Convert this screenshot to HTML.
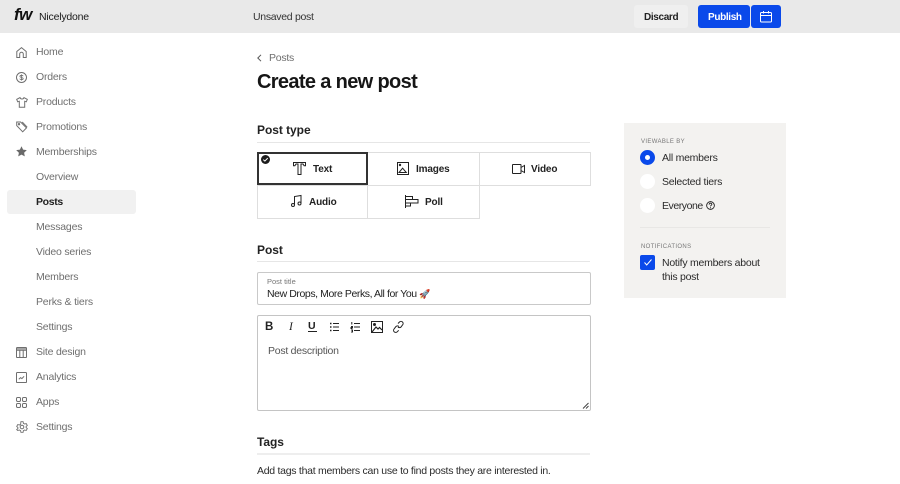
<!DOCTYPE html>
<html lang="en"><head><meta charset="utf-8"><title>Create a new post</title>
<style>
html,body{margin:0;padding:0;background:#fff}
body{width:900px;height:484px;overflow:hidden;position:relative;font-family:"Liberation Sans",sans-serif;color:#1a1a1a}
.t{position:absolute;white-space:nowrap;line-height:14px;font-size:10.5px;letter-spacing:-.25px}
.nav{color:#6f6f6f;left:36px;font-size:10.5px;letter-spacing:-.2px}
.b{font-weight:bold}
.lb{font-size:10px;font-weight:bold;letter-spacing:-.15px;color:#222}
.r{position:absolute}
svg{position:absolute;overflow:visible;fill:none}
.i{stroke:#6f6f6f;stroke-width:1}
.k{stroke:#222;stroke-width:1}
.line{position:absolute;left:257px;width:333px;height:1px;background:#e6e6e6}
.h{left:257px;font-size:12px;font-weight:bold;letter-spacing:-.05px;color:#222}
.cell{position:absolute;box-sizing:border-box;border:1px solid #dedede}
.radio{position:absolute;left:640px;width:15px;height:15px;border-radius:50%;background:#fff}
</style></head><body>

<div class="r" style="left:0;top:0;width:900px;height:33px;background:#e9e9e9"></div>
<div class="t b" style="left:14px;top:8px;font-size:17px;font-style:italic;letter-spacing:-.5px;color:#111">fw</div>
<div class="t" style="left:39px;top:10px;font-size:10.5px;color:#1a1a1a;letter-spacing:-.2px">Nicelydone</div>
<div class="t" style="left:253px;top:10px;font-size:10.5px;color:#333;letter-spacing:-.3px">Unsaved post</div>

<div class="r" style="left:634px;top:5px;width:54px;height:23px;background:#efefef;border-radius:3px"></div>
<div class="t lb" style="left:644px;top:11px;letter-spacing:-.35px">Discard</div>
<div class="r" style="left:698px;top:5px;width:52px;height:23px;background:#0a49ea;border-radius:3px"></div>
<div class="t lb" style="left:708px;top:11px;color:#fff;letter-spacing:-.35px">Publish</div>
<div class="r" style="left:751px;top:5px;width:30px;height:23px;background:#0a49ea;border-radius:3px"></div>
<svg style="left:760px;top:11px" width="12" height="12" viewBox="0 0 12 12" stroke="#fff" stroke-width="1"><rect x=".5" y="1.500" width="11" height="9.500" rx="1"/><path d="M.5 4.500h11M3.500 0v2.500M8.500 0v2.500"/></svg>

<!-- sidebar -->
<div class="r" style="left:7px;top:190px;width:129px;height:24px;background:#f1f1f1;border-radius:3px"></div>
<div class="t nav" style="top:45px">Home</div>
<div class="t nav" style="top:70px">Orders</div>
<div class="t nav" style="top:95px">Products</div>
<div class="t nav" style="top:120px">Promotions</div>
<div class="t nav" style="top:145px">Memberships</div>
<div class="t nav" style="top:170px">Overview</div>
<div class="t nav b" style="top:195px;color:#222;letter-spacing:-.35px">Posts</div>
<div class="t nav" style="top:220px">Messages</div>
<div class="t nav" style="top:245px">Video series</div>
<div class="t nav" style="top:270px">Members</div>
<div class="t nav" style="top:295px">Perks &amp; tiers</div>
<div class="t nav" style="top:320px">Settings</div>
<div class="t nav" style="top:345px">Site design</div>
<div class="t nav" style="top:370px">Analytics</div>
<div class="t nav" style="top:395px">Apps</div>
<div class="t nav" style="top:420px">Settings</div>

<svg class="i" style="left:16px;top:47px" width="11" height="11" viewBox="0 0 11 11"><path d="M.8 10.500V4.500L5.500.6l4.700 3.900v6H7.300V7a1.800 1.800 0 0 0-3.600 0v3.500z"/></svg>
<svg class="i" style="left:16px;top:72px" width="11" height="11" viewBox="0 0 11 11"><circle cx="5.500" cy="5.500" r="5"/><path d="M7.200 4.200c-.3-.7-1-.9-1.700-.9-.9 0-1.600.4-1.600 1.100 0 1.500 3.300.7 3.300 2.200 0 .7-.7 1.100-1.700 1.100-.8 0-1.500-.3-1.800-1M5.500 2.400v6.200" stroke-width=".8"/></svg>
<svg class="i" style="left:16px;top:97px" width="12" height="11" viewBox="0 0 12 11"><path d="M4 .6 .7 2.400l1 2.400 1.600-.5v6h5.400v-6l1.600.5 1-2.400L8 .6c-.3 1.900-3.700 1.900-4 0z"/></svg>
<svg class="i" style="left:16px;top:121px" width="12" height="12" viewBox="0 0 12 12"><path d="M.7 1v3.600l6 6.200 3.800-3.900L4.600 1z"/><path d="M6.200 1l5 5.200"/><circle cx="3" cy="3.200" r=".7"/></svg>
<svg style="left:16px;top:146px" width="11" height="11" viewBox="0 0 11 11"><path fill="#6a6a6a" d="M5.500.2l1.600 3.400 3.700.5-2.700 2.600.7 3.700-3.300-1.800-3.300 1.800.7-3.700L.2 4.100l3.700-.5z"/></svg>
<svg class="i" style="left:16px;top:347px" width="11" height="11" viewBox="0 0 11 11"><rect x=".5" y=".5" width="10" height="10" rx=".8"/><path d="M.5 3.300h10M3.800 3.300v7.200M7.200 3.300v7.200M.5 1.900h10"/></svg>
<svg class="i" style="left:16px;top:372px" width="11" height="11" viewBox="0 0 11 11"><rect x=".5" y=".5" width="10" height="10" rx=".8"/><path d="M2.800 7.200l1.800-1.600 1.300 1 2.200-2.300"/></svg>
<svg class="i" style="left:16px;top:397px" width="11" height="11" viewBox="0 0 11 11"><rect x=".5" y=".5" width="4" height="4" rx="1.200"/><rect x="6.500" y=".5" width="4" height="4" rx="1.200"/><rect x=".5" y="6.500" width="4" height="4" rx="1.200"/><rect x="6.500" y="6.500" width="4" height="4" rx="1.200"/></svg>
<svg class="i" style="left:16px;top:421px" width="12" height="12" viewBox="0 0 12 12"><circle cx="6" cy="6" r="1.800"/><path d="M4.900.7h2.200l.3 1.600 1.300.7 1.500-.5 1.100 1.900-1.200 1.100v1l1.200 1.100-1.100 1.900-1.500-.5-1.300.7-.3 1.600H4.900l-.3-1.600-1.300-.7-1.500.5L.7 8.600l1.200-1.100v-1L.7 5.400l1.100-1.900 1.500.5 1.300-.7z" stroke-width=".9"/></svg>

<!-- main -->
<svg style="left:257px;top:54px" width="5" height="8" viewBox="0 0 5 8" stroke="#555" stroke-width="1"><path d="M4 .8.8 4 4 7.200"/></svg>
<div class="t" style="left:269px;top:51px;color:#6f6f6f;font-size:10.500px">Posts</div>
<div class="t b" style="left:257px;top:70px;font-size:20px;line-height:24px;letter-spacing:-.65px;color:#161616">Create a new post</div>

<div class="t h" style="top:123px">Post type</div>
<div class="line" style="top:142px"></div>

<div class="cell" style="left:257px;top:152px;width:334px;height:34px"></div>
<div class="cell" style="left:257px;top:185px;width:223px;height:34px"></div>
<div class="r" style="left:367px;top:152px;width:1px;height:67px;background:#dedede"></div>
<div class="r" style="left:479px;top:152px;width:1px;height:34px;background:#dedede"></div>
<div class="r" style="left:257px;top:152px;width:111px;height:33px;box-sizing:border-box;border:2px solid #333;background:#fff"></div>
<svg style="left:261px;top:155px" width="9" height="9" viewBox="0 0 9 9"><circle cx="4.500" cy="4.500" r="4.500" fill="#1c1c1c"/><path d="M2.300 4.600l1.600 1.500 2.800-3" stroke="#fff" stroke-width="1"/></svg>
<svg class="k" style="left:293px;top:162px" width="13" height="13" viewBox="0 0 13 13"><path d="M.5.5h12v3.200h-1.400L10 2H8v10.500H5V2H3L1.900 3.700H.5z"/></svg>
<div class="t lb" style="left:313px;top:162px;top:162.500px">Text</div>
<svg class="k" style="left:397px;top:162px" width="12" height="13" viewBox="0 0 12 13"><rect x=".5" y=".5" width="11" height="12"/><path d="M2 10.500l3.600-4.300 3.700 4.300z"/><circle cx="3" cy="3" r=".7"/></svg>
<div class="t lb" style="left:416px;top:163px">Images</div>
<svg class="k" style="left:512px;top:164px" width="13" height="10" viewBox="0 0 13 10"><rect x=".5" y=".5" width="8.500" height="9" rx=".5"/><path d="M9 3.500l3.500-2v7L9 6.500"/></svg>
<div class="t lb" style="left:531px;top:163px">Video</div>
<svg class="k" style="left:291px;top:195px" width="11" height="12" viewBox="0 0 11 12"><path d="M3.500 10V1.500l6.500-1V8.500"/><circle cx="2" cy="10" r="1.500"/><circle cx="8.500" cy="8.500" r="1.500"/></svg>
<div class="t lb" style="left:309px;top:196px">Audio</div>
<svg class="k" style="left:405px;top:195px" width="14" height="13" viewBox="0 0 14 13"><path d="M.5 0v13M.5 1.500h7v3h-7M.5 4.500h12.500v3.500H.5M.5 8h5v3H.5"/></svg>
<div class="t lb" style="left:425px;top:196px">Poll</div>

<div class="t h" style="top:243px">Post</div>
<div class="line" style="top:261px"></div>

<div class="r" style="left:257px;top:272px;width:334px;height:33px;box-sizing:border-box;border:1px solid #c9c9c9;border-radius:2px"></div>
<div class="t" style="left:267px;top:276px;font-size:7.500px;line-height:12px;color:#777;letter-spacing:0">Post title</div>
<div class="t" style="left:267px;top:287px;font-size:10.500px;color:#222;letter-spacing:-.42px">New Drops, More Perks, All for You <span style="font-size:9px;letter-spacing:0">🚀</span></div>

<div class="r" style="left:257px;top:315px;width:334px;height:96px;box-sizing:border-box;border:1px solid #c4c4c4;border-radius:2px"></div>
<div class="t b" style="left:265px;top:320px;font-size:11.500px;color:#222">B</div>
<div class="t" style="left:289px;top:320px;font-size:11.500px;font-family:'Liberation Serif',serif;font-style:italic;color:#222">I</div>
<div class="t" style="left:308px;top:319px;font-size:10.500px;color:#222;font-weight:bold">U</div>
<div class="r" style="left:308px;top:331px;width:9px;height:1px;background:#222"></div>
<svg class="k" style="left:330px;top:322px" width="9" height="10" viewBox="0 0 9 10"><path d="M3 1.500h6M3 5h6M3 8.500h6"/><path d="M0 1.500h1.500M0 5h1.500M0 8.500h1.500" stroke-width="1.500"/></svg>
<svg class="k" style="left:351px;top:322px" width="9" height="10" viewBox="0 0 9 10"><path d="M3 1.500h6M3 5h6M3 8.500h6M.8 0v2.500M0 4.500h1.500v1H0v1h1.500M0 8h1.500v2H0"/></svg>
<svg class="k" style="left:371px;top:321px" width="12" height="12" viewBox="0 0 12 12"><rect x=".5" y=".5" width="11" height="11"/><path d="M1 11l4-5 2 2 1.500-1.500L11 9" stroke-width="1.200"/><circle cx="3.500" cy="3.500" r="1" fill="#222"/></svg>
<svg class="k" style="left:393px;top:321px" width="11" height="12" viewBox="0 0 11 12"><path d="M5 2.500l1.500-1.500a2 2 0 0 1 3 3L8 6a2 2 0 0 1-3 0M6 5.500a2 2 0 0 0-3 0L1.200 7.800a2 2 0 0 0 3 3l1.500-1.500"/></svg>
<div class="t" style="left:268px;top:344px;color:#555;font-size:10.500px">Post description</div>
<svg style="left:582px;top:402px" width="7" height="7" viewBox="0 0 7 7" stroke="#444" stroke-width="1"><path d="M1 6.500L6.500 1M4 6.500L6.500 4"/></svg>

<div class="t h" style="top:435px">Tags</div>
<div class="line" style="top:453px;height:2px;background:#eeeeee"></div>
<div class="t" style="left:257px;top:464px;font-size:10.500px;color:#2a2a2a;letter-spacing:-.27px">Add tags that members can use to find posts they are interested in.</div>

<!-- right panel -->
<div class="r" style="left:624px;top:123px;width:162px;height:175px;background:#f3f2f0"></div>
<div class="t" style="left:641px;top:135px;font-size:6px;letter-spacing:.35px;color:#777">VIEWABLE BY</div>
<div class="radio" style="top:150px;background:#0a49ea"></div>
<div class="r" style="left:645px;top:155px;width:5px;height:5px;border-radius:50%;background:#fff"></div>
<div class="t" style="left:662px;top:151px;color:#2a2a2a">All members</div>
<div class="radio" style="top:174px"></div>
<div class="t" style="left:662px;top:175px;color:#2a2a2a">Selected tiers</div>
<div class="radio" style="top:198px"></div>
<div class="t" style="left:662px;top:199px;color:#2a2a2a;letter-spacing:-.45px">Everyone</div>
<svg style="left:706px;top:201px" width="9" height="9" viewBox="0 0 10 10" stroke="#222" stroke-width="1"><circle cx="5" cy="5" r="4.300"/><path d="M3.500 4c0-2 3-2 3-.300 0 1-1.500 1-1.500 2.300M5 7v1"/></svg>
<div class="r" style="left:640px;top:227px;width:130px;height:1px;background:#e8e7e5"></div>
<div class="t" style="left:641px;top:240px;font-size:6px;letter-spacing:.35px;color:#777">NOTIFICATIONS</div>
<div class="r" style="left:640px;top:255px;width:15px;height:15px;border-radius:2px;background:#0a49ea"></div>
<svg style="left:644px;top:259px" width="8" height="7" viewBox="0 0 8 7" stroke="#fff" stroke-width="1"><path d="M.5 3.500l2.200 2.500L7.500.5"/></svg>
<div class="t" style="left:662px;top:256px;color:#2a2a2a">Notify members about</div>
<div class="t" style="left:662px;top:270px;color:#2a2a2a">this post</div>
</body></html>
